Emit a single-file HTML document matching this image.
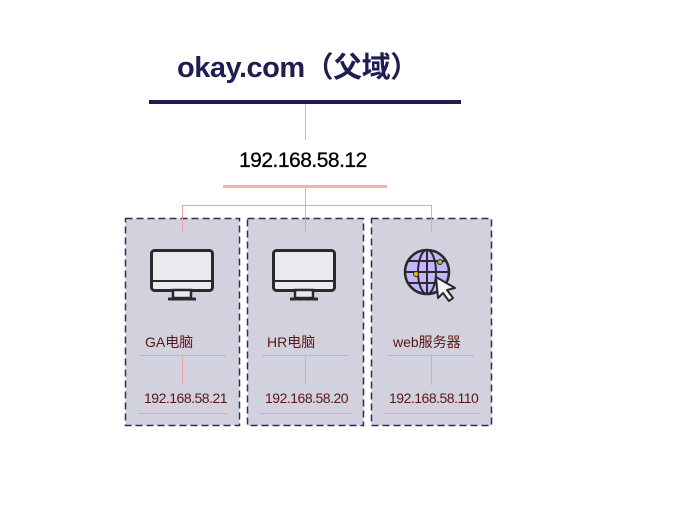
<!DOCTYPE html>
<html><head><meta charset="utf-8"><style>
body{margin:0;width:678px;height:528px;background:#fff;position:relative;overflow:hidden;font-family:"Liberation Sans","Noto Sans CJK SC",sans-serif}
.a{position:absolute}
.lbl{position:absolute;font-size:14px;color:#5a1414;white-space:nowrap}
.ip{position:absolute;font-size:14px;color:#5a1414;white-space:nowrap;letter-spacing:-0.5px}
.pl{position:absolute;background:#f2a0a0}
</style></head><body>
<div class="a" style="left:177px;top:44px;font-size:29px;font-weight:bold;color:#1f1d52;letter-spacing:-0.5px">okay.com（父域）</div>
<div class="a" style="left:149px;top:100px;width:312px;height:4px;background:#1f1d52"></div>
<div class="pl" style="left:305px;top:104px;width:1px;height:36px"></div>
<div class="a" style="left:239px;top:149px;font-size:21px;color:#000;letter-spacing:-0.5px;-webkit-text-stroke:0.3px #000">192.168.58.12</div>
<div class="a" style="left:223px;top:185px;width:164px;height:3px;background:#f8b0b0"></div>
<svg class="a" style="left:0;top:0" width="678" height="528">
<g fill="#d2d2de" stroke="#2e2b60" stroke-width="1.5" stroke-dasharray="7,4">
<rect x="125.5" y="218.5" width="114" height="207"/>
<rect x="247.5" y="218.5" width="116" height="207"/>
<rect x="371.5" y="218.5" width="120" height="207"/>
</g>
<g stroke="#f2a0a0" stroke-width="1">
<path d="M305.5 188 V232 M182.5 205.5 H431.5 M182.5 205 V232 M431.5 205 V232"/>
<path d="M140 355.5 H226 M262 355.5 H348 M388 355.5 H474"/>
<path d="M182.5 356 V385 M305.5 356 V385 M431.5 356 V385"/>
<path d="M138 413.5 H227 M259 413.5 H351 M383 413.5 H480"/>
</g>
</svg>

<svg class="a" style="left:150px;top:249px" width="64" height="54" viewBox="0 0 64 54"><rect x="1.5" y="1.5" width="61" height="40" rx="3" fill="#e8eaee" stroke="#2a2a2a" stroke-width="3"/><line x1="2" y1="32" x2="62" y2="32" stroke="#2a2a2a" stroke-width="2"/><rect x="23" y="41" width="18" height="8" fill="#e8eaee" stroke="#2a2a2a" stroke-width="2.5"/><line x1="18" y1="50" x2="46" y2="50" stroke="#2a2a2a" stroke-width="3"/></svg>
<svg class="a" style="left:272px;top:249px" width="64" height="54" viewBox="0 0 64 54"><rect x="1.5" y="1.5" width="61" height="40" rx="3" fill="#e8eaee" stroke="#2a2a2a" stroke-width="3"/><line x1="2" y1="32" x2="62" y2="32" stroke="#2a2a2a" stroke-width="2"/><rect x="23" y="41" width="18" height="8" fill="#e8eaee" stroke="#2a2a2a" stroke-width="2.5"/><line x1="18" y1="50" x2="46" y2="50" stroke="#2a2a2a" stroke-width="3"/></svg>
<svg class="a" style="left:403px;top:248px" width="60" height="58" viewBox="0 0 60 58"><circle cx="24" cy="24" r="22" fill="#c4b5fd" stroke="#2a2a2a" stroke-width="2.5"/><ellipse cx="24" cy="24" rx="9" ry="22" fill="none" stroke="#2a2a2a" stroke-width="2"/><line x1="2" y1="24" x2="46" y2="24" stroke="#2a2a2a" stroke-width="2"/><line x1="24" y1="2" x2="24" y2="46" stroke="#2a2a2a" stroke-width="2"/><path d="M6 13 H42 M6 35 H42" stroke="#2a2a2a" stroke-width="2"/><circle cx="13" cy="26" r="2.5" fill="#f5b800" stroke="#2a2a2a"/><circle cx="37" cy="14" r="2.5" fill="#7ed321" stroke="#2a2a2a"/><path d="M33 29 L52 40 L44 42 L50 50 L46 53 L40 45 L35 50 Z" fill="#f4f4f4" stroke="#2a2a2a" stroke-width="2" stroke-linejoin="round"/></svg>

<div class="lbl" style="left:145px;top:332px">GA电脑</div>
<div class="lbl" style="left:267px;top:332px">HR电脑</div>
<div class="lbl" style="left:393px;top:332px">web服务器</div>
<div class="ip" style="left:144px;top:390px">192.168.58.21</div>
<div class="ip" style="left:265px;top:390px">192.168.58.20</div>
<div class="ip" style="left:389px;top:390px">192.168.58.110</div>
</body></html>
